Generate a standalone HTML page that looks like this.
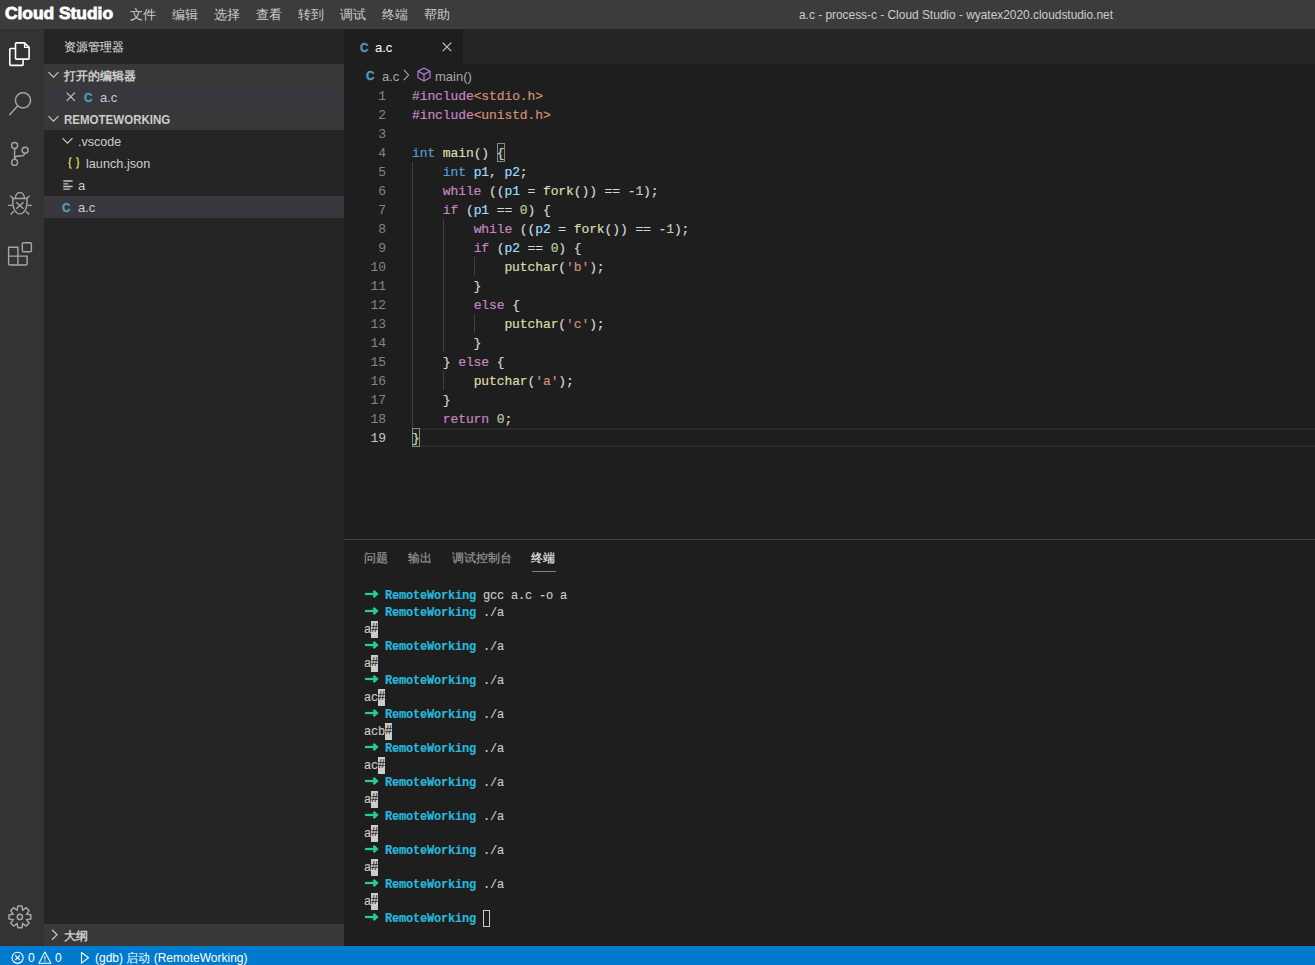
<!DOCTYPE html>
<html><head><meta charset="utf-8"><style>
*{margin:0;padding:0;box-sizing:border-box}
html,body{width:1315px;height:965px;overflow:hidden;background:#1e1e1e;font-family:"Liberation Sans",sans-serif;color:#cccccc}
div,span.abs,svg.abs{position:absolute}
.t{white-space:nowrap;line-height:1}
.kw{color:#c586c0}.str{color:#ce9178}.ty{color:#569cd6}.fn{color:#dcdcaa}.var{color:#9cdcfe}.num{color:#b5cea8}
.g{color:#23d18b;font-weight:bold}.cy{color:#29b8db;font-weight:bold}
.ln{left:344px;width:42px;text-align:right;font-family:"Liberation Mono",monospace;font-size:13px;color:#858585;height:19px;line-height:19px}
.code{-webkit-text-stroke:0.2px currentColor;left:412px;font-family:"Liberation Mono",monospace;font-size:13px;letter-spacing:-0.1px;color:#d4d4d4;height:19px;line-height:19px;white-space:pre}
.guide{width:1px;background:#404040}
.term{-webkit-text-stroke:0.15px currentColor;left:364px;font-family:"Liberation Mono",monospace;font-size:12px;letter-spacing:-0.2px;color:#cccccc;height:17px;line-height:17px;white-space:pre}
.pct{background:#cccccc;color:#1e1e1e;display:inline-block;height:17px;vertical-align:top;margin-top:-1px}
.term{padding-top:1px}
.code,.ln{padding-top:1px}
</style></head><body>
<div style="left:0;top:0;width:1315px;height:29px;background:#3c3c3c"></div>
<div class="t" style="left:4.9px;top:5.3px;font-size:17.4px;font-weight:bold;color:#ffffff;-webkit-text-stroke:0.8px #ffffff;letter-spacing:0px">Cloud Studio</div>
<div class="t" style="left:130px;top:8px;font-size:13px;color:#cccccc">文件</div>
<div class="t" style="left:172px;top:8px;font-size:13px;color:#cccccc">编辑</div>
<div class="t" style="left:214px;top:8px;font-size:13px;color:#cccccc">选择</div>
<div class="t" style="left:256px;top:8px;font-size:13px;color:#cccccc">查看</div>
<div class="t" style="left:298px;top:8px;font-size:13px;color:#cccccc">转到</div>
<div class="t" style="left:340px;top:8px;font-size:13px;color:#cccccc">调试</div>
<div class="t" style="left:382px;top:8px;font-size:13px;color:#cccccc">终端</div>
<div class="t" style="left:424px;top:8px;font-size:13px;color:#cccccc">帮助</div>
<div class="t" style="left:799px;top:10.2px;font-size:11.9px;color:#cccccc">a.c - process-c - Cloud Studio - wyatex2020.cloudstudio.net</div>
<div style="left:0;top:29px;width:44px;height:917px;background:#333333"></div>
<svg class="abs" style="left:0;top:29px" width="44" height="260" viewBox="0 29 44 260" fill="none">
<g stroke="#ffffff" stroke-width="1.6" stroke-linejoin="round">
<path d="M15.5 48.5 H10.6 Q9.8 48.5 9.8 49.3 V64.6 Q9.8 65.4 10.6 65.4 H22.3 Q23.1 65.4 23.1 64.6 V60"/>
<path d="M16.4 42.9 H24.6 L29.1 47.4 V58.2 Q29.1 59.1 28.2 59.1 H16.4 Q15.5 59.1 15.5 58.2 V43.8 Q15.5 42.9 16.4 42.9 Z"/>
<path d="M24.6 42.9 V47.4 H29.1" stroke-width="1.4"/>
</g>
<g stroke="#a6a6a6" stroke-width="1.4" fill="none">
<circle cx="23" cy="100.3" r="7.6" stroke-width="1.5"/>
<path d="M17.6 106 L9.4 115" stroke-width="1.5"/>
<circle cx="14.6" cy="145.5" r="3"/>
<circle cx="14.6" cy="162.4" r="3"/>
<circle cx="25.1" cy="150.2" r="3"/>
<path d="M14.6 148.5 V159.4"/>
<path d="M24.7 153.2 C24.5 155.2 23.3 156 21 156 H18.2 C16 156 14.8 157 14.6 159.3"/>
<path d="M15.4 198.5 C15.4 195 17.3 192.5 19.9 192.5 C22.5 192.5 24.4 195 24.4 198.5"/>
<path d="M12.9 198.5 H26.9 C27.3 203 27 207 25 210.5 C23.5 213 21.8 213.9 19.9 213.9 C18 213.9 16.3 213 14.8 210.5 C12.8 207 12.5 203 12.9 198.5 Z"/>
<path d="M16.3 202.2 L23.5 208.8 M23.5 202.2 L16.3 208.8"/>
<path d="M8.1 205.4 H12.6 M27.3 205.4 H31.8 M10.3 195.8 L13.2 198.4 M29.6 195.8 L26.7 198.4 M10.5 214.5 L13.9 211.3 M29.3 214.5 L25.9 211.3"/>
<path d="M8.6 247.2 H17.9 V256.1 H27.1 V263.8 Q27.1 265 25.9 265 H9.8 Q8.6 265 8.6 263.8 Z M8.6 256.1 H17.9 V265"/>
<rect x="22.3" y="242.8" width="9.1" height="9" rx="1.3"/>
</g>
</svg>
<svg class="abs" style="left:0;top:896px" width="44" height="44" viewBox="0 896 44 44" fill="none">
<g stroke="#a6a6a6" stroke-width="1.5" stroke-linejoin="miter">
<path id="gear" d="M17.11 910.16 L17.88 905.99 L21.92 905.99 L22.69 910.16 L26.19 907.75 L29.05 910.61 L26.64 914.11 L30.81 914.88 L30.81 918.92 L26.64 919.69 L29.05 923.19 L26.19 926.05 L22.69 923.64 L21.92 927.81 L17.88 927.81 L17.11 923.64 L13.61 926.05 L10.75 923.19 L13.16 919.69 L8.99 918.92 L8.99 914.88 L13.16 914.11 L10.75 910.61 L13.61 907.75 Z"/>
<circle cx="19.9" cy="916.9" r="2.6"/>
</g></svg>
<div style="left:44px;top:29px;width:300px;height:917px;background:#252526"></div>
<div class="t" style="left:64px;top:40.8px;font-size:12px;color:#cfcfcf;-webkit-text-stroke:0.15px #cfcfcf">资源管理器</div>
<div style="left:44px;top:64px;width:300px;height:22px;background:#383838"></div>
<svg class="abs" style="left:48px;top:71px" width="12" height="8" viewBox="0 0 12 8"><path d="M0.5 1.2 L5.5 6.2 L10.5 1.2" stroke="#c5c5c5" stroke-width="1.2" fill="none"/></svg>
<div class="t" style="left:64px;top:69.5px;font-size:12px;font-weight:bold;color:#cccccc">打开的编辑器</div>
<div style="left:44px;top:86px;width:300px;height:22px;background:#37373d"></div>
<svg class="abs" style="left:65.5px;top:92.3px" width="10" height="10" viewBox="0 0 10 10"><path d="M0.7 0.7 L8.9 8.9 M8.9 0.7 L0.7 8.9" stroke="#c5c5c5" stroke-width="1.2"/></svg>
<div class="t" style="left:84.3px;top:91.0px;font-size:13.3px;font-weight:bold;color:#519aba;-webkit-text-stroke:0.45px #519aba;transform:scaleX(0.88);transform-origin:0 0">C</div>
<div class="t" style="left:100px;top:91px;font-size:13px;color:#cccccc">a.c</div>
<div style="left:44px;top:108px;width:300px;height:22px;background:#383838"></div>
<svg class="abs" style="left:48px;top:115px" width="12" height="8" viewBox="0 0 12 8"><path d="M0.5 1.2 L5.5 6.2 L10.5 1.2" stroke="#c5c5c5" stroke-width="1.2" fill="none"/></svg>
<div class="t" style="left:64px;top:114px;font-size:12.6px;font-weight:bold;color:#cccccc;transform:scaleX(0.915);transform-origin:0 0">REMOTEWORKING</div>
<svg class="abs" style="left:62px;top:137px" width="12" height="8" viewBox="0 0 12 8"><path d="M0.5 1.2 L5.5 6.2 L10.5 1.2" stroke="#c5c5c5" stroke-width="1.2" fill="none"/></svg>
<div class="t" style="left:78px;top:136px;font-size:12.5px;color:#cccccc">.vscode</div>
<svg class="abs" style="left:68px;top:157px" width="12" height="12" viewBox="0 0 12 12" fill="none" stroke="#cbcb41" stroke-width="1.5"><path d="M3.6 0.8 Q1.8 0.8 1.8 2.4 V4.4 Q1.8 5.8 0.6 5.9 Q1.8 6.1 1.8 7.4 V9.4 Q1.8 11.1 3.6 11.1"/><path d="M8.2 0.8 Q10 0.8 10 2.4 V4.4 Q10 5.8 11.2 5.9 Q10 6.1 10 7.4 V9.4 Q10 11.1 8.2 11.1"/></svg>
<div class="t" style="left:86px;top:158px;font-size:12.7px;color:#cccccc">launch.json</div>
<svg class="abs" style="left:63px;top:180px" width="10" height="10" viewBox="0 0 10 10"><path d="M0.3 1 H9.6 M0.3 3.8 H5.3 M0.3 6.5 H9.6 M0.3 9.1 H7.1" stroke="#c5c5c5" stroke-width="1.3"/></svg>
<div class="t" style="left:78px;top:179px;font-size:13px;color:#cccccc">a</div>
<div style="left:44px;top:196px;width:300px;height:22px;background:#37373d"></div>
<div class="t" style="left:61.599999999999994px;top:201.0px;font-size:13.3px;font-weight:bold;color:#519aba;-webkit-text-stroke:0.45px #519aba;transform:scaleX(0.88);transform-origin:0 0">C</div>
<div class="t" style="left:78px;top:201px;font-size:13px;color:#cccccc">a.c</div>
<div style="left:44px;top:924px;width:300px;height:22px;background:#383838"></div>
<svg class="abs" style="left:51px;top:929px" width="8" height="12" viewBox="0 0 8 12"><path d="M1 0.8 L6 5.8 L1 10.8" stroke="#c5c5c5" stroke-width="1.3" fill="none"/></svg>
<div class="t" style="left:64px;top:929.7px;font-size:12px;font-weight:bold;color:#cccccc">大纲</div>
<div style="left:344px;top:29px;width:971px;height:35px;background:#252526"></div>
<div style="left:344px;top:29px;width:119px;height:35px;background:#1e1e1e"></div>
<div class="t" style="left:360.1px;top:41.0px;font-size:13.3px;font-weight:bold;color:#519aba;-webkit-text-stroke:0.45px #519aba;transform:scaleX(0.88);transform-origin:0 0">C</div>
<div class="t" style="left:375px;top:41px;font-size:13px;color:#ffffff">a.c</div>
<svg class="abs" style="left:442px;top:42.3px" width="10" height="10" viewBox="0 0 10 10"><path d="M0.7 0.7 L9.2 9.2 M9.2 0.7 L0.7 9.2" stroke="#c5c5c5" stroke-width="1.2"/></svg>
<div style="left:344px;top:64px;width:971px;height:475px;background:#1e1e1e"></div>
<div class="t" style="left:366.3px;top:69.0px;font-size:13.3px;font-weight:bold;color:#519aba;-webkit-text-stroke:0.45px #519aba;transform:scaleX(0.88);transform-origin:0 0">C</div>
<div class="t" style="left:382px;top:70px;font-size:13px;color:#a9a9a9">a.c</div>
<svg class="abs" style="left:403px;top:69px" width="7" height="12" viewBox="0 0 7 12"><path d="M0.8 0.8 L5.6 6 L0.8 11.2" stroke="#a9a9a9" stroke-width="1.1" fill="none"/></svg>
<svg class="abs" style="left:417px;top:67px" width="14" height="15" viewBox="0 0 14 15" fill="none"><g stroke="#b180d7" stroke-width="1.2" stroke-linejoin="round"><path d="M7 1 L13 4.2 V10.8 L7 14 L1 10.8 V4.2 Z"/><path d="M1 4.2 L7 7.4 L13 4.2 M7 7.4 V14"/></g></svg>
<div class="t" style="left:435px;top:70px;font-size:13px;color:#a9a9a9">main()</div>
<div style="left:412px;top:428px;width:903px;height:19px;border-top:2px solid #282828;border-bottom:2px solid #282828"></div>
<div class="guide" style="left:412px;top:162px;height:266px"></div>
<div style="left:412px;top:428px;width:8px;height:19px;border:1px solid #888888;background:rgba(0,100,0,0.1)"></div>
<div style="left:497px;top:143px;width:8px;height:19px;border:1px solid #888888;background:rgba(0,100,0,0.1)"></div>
<div class="guide" style="left:443px;top:219px;height:133px"></div>
<div class="guide" style="left:443px;top:371px;height:19px"></div>
<div class="guide" style="left:474px;top:257px;height:19px"></div>
<div class="guide" style="left:474px;top:314px;height:19px"></div>
<div class="ln" style="top:86px;color:#858585">1</div>
<div class="code" style="top:86px"><span class="kw">#include</span><span class="str">&lt;stdio.h&gt;</span></div>
<div class="ln" style="top:105px;color:#858585">2</div>
<div class="code" style="top:105px"><span class="kw">#include</span><span class="str">&lt;unistd.h&gt;</span></div>
<div class="ln" style="top:124px;color:#858585">3</div>
<div class="code" style="top:124px"></div>
<div class="ln" style="top:143px;color:#858585">4</div>
<div class="code" style="top:143px"><span class="ty">int</span> <span class="fn">main</span>() {</div>
<div class="ln" style="top:162px;color:#858585">5</div>
<div class="code" style="top:162px">    <span class="ty">int</span> <span class="var">p1</span>, <span class="var">p2</span>;</div>
<div class="ln" style="top:181px;color:#858585">6</div>
<div class="code" style="top:181px">    <span class="kw">while</span> ((<span class="var">p1</span> = <span class="fn">fork</span>()) == -<span class="num">1</span>);</div>
<div class="ln" style="top:200px;color:#858585">7</div>
<div class="code" style="top:200px">    <span class="kw">if</span> (<span class="var">p1</span> == <span class="num">0</span>) {</div>
<div class="ln" style="top:219px;color:#858585">8</div>
<div class="code" style="top:219px">        <span class="kw">while</span> ((<span class="var">p2</span> = <span class="fn">fork</span>()) == -<span class="num">1</span>);</div>
<div class="ln" style="top:238px;color:#858585">9</div>
<div class="code" style="top:238px">        <span class="kw">if</span> (<span class="var">p2</span> == <span class="num">0</span>) {</div>
<div class="ln" style="top:257px;color:#858585">10</div>
<div class="code" style="top:257px">            <span class="fn">putchar</span>(<span class="str">&#x27;b&#x27;</span>);</div>
<div class="ln" style="top:276px;color:#858585">11</div>
<div class="code" style="top:276px">        }</div>
<div class="ln" style="top:295px;color:#858585">12</div>
<div class="code" style="top:295px">        <span class="kw">else</span> {</div>
<div class="ln" style="top:314px;color:#858585">13</div>
<div class="code" style="top:314px">            <span class="fn">putchar</span>(<span class="str">&#x27;c&#x27;</span>);</div>
<div class="ln" style="top:333px;color:#858585">14</div>
<div class="code" style="top:333px">        }</div>
<div class="ln" style="top:352px;color:#858585">15</div>
<div class="code" style="top:352px">    } <span class="kw">else</span> {</div>
<div class="ln" style="top:371px;color:#858585">16</div>
<div class="code" style="top:371px">        <span class="fn">putchar</span>(<span class="str">&#x27;a&#x27;</span>);</div>
<div class="ln" style="top:390px;color:#858585">17</div>
<div class="code" style="top:390px">    }</div>
<div class="ln" style="top:409px;color:#858585">18</div>
<div class="code" style="top:409px">    <span class="kw">return</span> <span class="num">0</span>;</div>
<div class="ln" style="top:428px;color:#c6c6c6">19</div>
<div class="code" style="top:428px">}</div>
<div style="left:344px;top:539px;width:971px;height:407px;background:#1e1e1e;border-top:1px solid #454545"></div>
<div class="t" style="left:364px;top:551.6px;font-size:12.3px;color:#969696;-webkit-text-stroke:0.2px #969696">问题</div>
<div class="t" style="left:408px;top:551.6px;font-size:12.3px;color:#969696;-webkit-text-stroke:0.2px #969696">输出</div>
<div class="t" style="left:452px;top:551.6px;font-size:12.3px;color:#969696;-webkit-text-stroke:0.2px #969696">调试控制台</div>
<div class="t" style="left:531px;top:551.6px;font-size:12.3px;color:#e7e7e7;-webkit-text-stroke:0.2px #e7e7e7">终端</div>
<div style="left:532px;top:571px;width:24px;height:1px;background:#808080"></div>
<svg class="abs" style="left:364px;top:589px" width="15" height="10" viewBox="0 0 15 10"><path d="M1 5 H13" stroke="#23d18b" stroke-width="2.2"/><path d="M9.4 1.8 L12.8 5 L9.4 8.2" stroke="#23d18b" stroke-width="2.5" fill="none"/></svg>
<div class="term" style="top:587px">   <span class="cy">RemoteWorking</span> gcc a.c -o a</div>
<svg class="abs" style="left:364px;top:606px" width="15" height="10" viewBox="0 0 15 10"><path d="M1 5 H13" stroke="#23d18b" stroke-width="2.2"/><path d="M9.4 1.8 L12.8 5 L9.4 8.2" stroke="#23d18b" stroke-width="2.5" fill="none"/></svg>
<div class="term" style="top:604px">   <span class="cy">RemoteWorking</span> ./a</div>
<div class="term" style="top:621px">a<span class="pct">#</span></div>
<svg class="abs" style="left:364px;top:640px" width="15" height="10" viewBox="0 0 15 10"><path d="M1 5 H13" stroke="#23d18b" stroke-width="2.2"/><path d="M9.4 1.8 L12.8 5 L9.4 8.2" stroke="#23d18b" stroke-width="2.5" fill="none"/></svg>
<div class="term" style="top:638px">   <span class="cy">RemoteWorking</span> ./a</div>
<div class="term" style="top:655px">a<span class="pct">#</span></div>
<svg class="abs" style="left:364px;top:674px" width="15" height="10" viewBox="0 0 15 10"><path d="M1 5 H13" stroke="#23d18b" stroke-width="2.2"/><path d="M9.4 1.8 L12.8 5 L9.4 8.2" stroke="#23d18b" stroke-width="2.5" fill="none"/></svg>
<div class="term" style="top:672px">   <span class="cy">RemoteWorking</span> ./a</div>
<div class="term" style="top:689px">ac<span class="pct">#</span></div>
<svg class="abs" style="left:364px;top:708px" width="15" height="10" viewBox="0 0 15 10"><path d="M1 5 H13" stroke="#23d18b" stroke-width="2.2"/><path d="M9.4 1.8 L12.8 5 L9.4 8.2" stroke="#23d18b" stroke-width="2.5" fill="none"/></svg>
<div class="term" style="top:706px">   <span class="cy">RemoteWorking</span> ./a</div>
<div class="term" style="top:723px">acb<span class="pct">#</span></div>
<svg class="abs" style="left:364px;top:742px" width="15" height="10" viewBox="0 0 15 10"><path d="M1 5 H13" stroke="#23d18b" stroke-width="2.2"/><path d="M9.4 1.8 L12.8 5 L9.4 8.2" stroke="#23d18b" stroke-width="2.5" fill="none"/></svg>
<div class="term" style="top:740px">   <span class="cy">RemoteWorking</span> ./a</div>
<div class="term" style="top:757px">ac<span class="pct">#</span></div>
<svg class="abs" style="left:364px;top:776px" width="15" height="10" viewBox="0 0 15 10"><path d="M1 5 H13" stroke="#23d18b" stroke-width="2.2"/><path d="M9.4 1.8 L12.8 5 L9.4 8.2" stroke="#23d18b" stroke-width="2.5" fill="none"/></svg>
<div class="term" style="top:774px">   <span class="cy">RemoteWorking</span> ./a</div>
<div class="term" style="top:791px">a<span class="pct">#</span></div>
<svg class="abs" style="left:364px;top:810px" width="15" height="10" viewBox="0 0 15 10"><path d="M1 5 H13" stroke="#23d18b" stroke-width="2.2"/><path d="M9.4 1.8 L12.8 5 L9.4 8.2" stroke="#23d18b" stroke-width="2.5" fill="none"/></svg>
<div class="term" style="top:808px">   <span class="cy">RemoteWorking</span> ./a</div>
<div class="term" style="top:825px">a<span class="pct">#</span></div>
<svg class="abs" style="left:364px;top:844px" width="15" height="10" viewBox="0 0 15 10"><path d="M1 5 H13" stroke="#23d18b" stroke-width="2.2"/><path d="M9.4 1.8 L12.8 5 L9.4 8.2" stroke="#23d18b" stroke-width="2.5" fill="none"/></svg>
<div class="term" style="top:842px">   <span class="cy">RemoteWorking</span> ./a</div>
<div class="term" style="top:859px">a<span class="pct">#</span></div>
<svg class="abs" style="left:364px;top:878px" width="15" height="10" viewBox="0 0 15 10"><path d="M1 5 H13" stroke="#23d18b" stroke-width="2.2"/><path d="M9.4 1.8 L12.8 5 L9.4 8.2" stroke="#23d18b" stroke-width="2.5" fill="none"/></svg>
<div class="term" style="top:876px">   <span class="cy">RemoteWorking</span> ./a</div>
<div class="term" style="top:893px">a<span class="pct">#</span></div>
<svg class="abs" style="left:364px;top:912px" width="15" height="10" viewBox="0 0 15 10"><path d="M1 5 H13" stroke="#23d18b" stroke-width="2.2"/><path d="M9.4 1.8 L12.8 5 L9.4 8.2" stroke="#23d18b" stroke-width="2.5" fill="none"/></svg>
<div class="term" style="top:910px">   <span class="cy">RemoteWorking</span> </div>
<div style="left:483px;top:910px;width:7px;height:17px;border:1px solid #cccccc"></div>
<div style="left:0;top:946px;width:1315px;height:19px;background:#007acc"></div>
<svg class="abs" style="left:0;top:946px" width="100" height="19" viewBox="0 946 100 19" fill="none" stroke="#ffffff" stroke-width="1.1">
<circle cx="17.6" cy="957.8" r="5.6"/><path d="M15.2 955.4 L20 960.2 M20 955.4 L15.2 960.2"/>
<path d="M44.9 952 L50.9 963.2 H38.9 Z" stroke-linejoin="round"/><path d="M44.9 956.2 V959.4 M44.9 960.6 V961.8"/>
<path d="M81.5 952.5 L88.5 957.8 L81.5 963.1 Z" stroke-linejoin="round"/>
</svg>
<div class="t" style="left:28px;top:952px;font-size:12px;color:#ffffff">0</div>
<div class="t" style="left:55px;top:952px;font-size:12px;color:#ffffff">0</div>
<div class="t" style="left:95px;top:952px;font-size:12px;color:#ffffff">(gdb) 启动 (RemoteWorking)</div>
</body></html>
